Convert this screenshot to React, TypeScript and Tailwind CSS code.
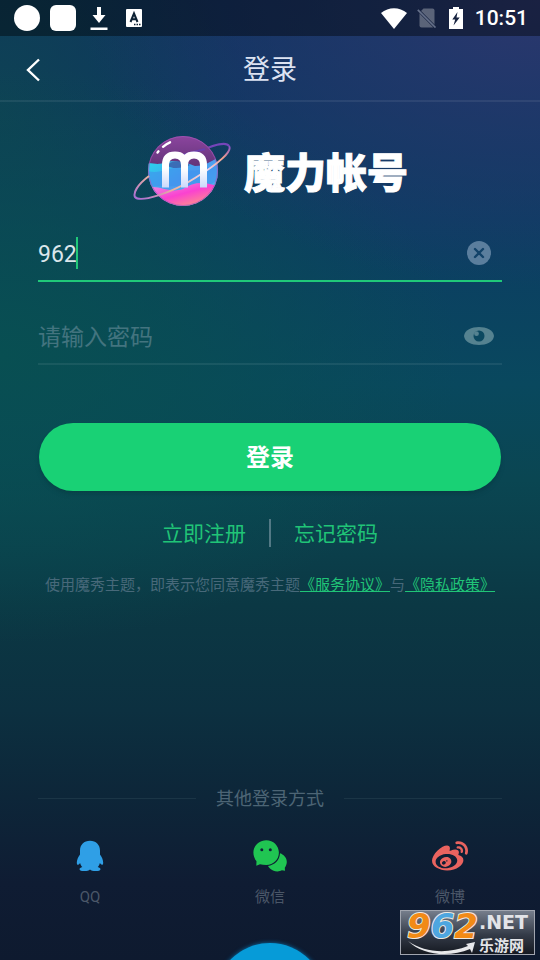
import { useState } from "react";
import type { ReactNode } from "react";
import { FaWeibo } from "react-icons/fa";

const PROVIDERS: { name: string; icon: ReactNode }[] = [
  { name: "QQ", icon: <QQIcon /> },
  { name: "微信", icon: <WeChatIcon /> },
  { name: "微博", icon: <FaWeibo className="h-9 w-9 text-[#e9635f]" /> },
];

function QQIcon() {
  return (
    <svg viewBox="0 0 36 36" className="h-9 w-9" fill="#2f9fe6">
      <path d="M18 1.800C12 1.800 8 6 8 11.500V15.500C6.100 18 4.800 21 4.800 23.700C4.800 25 5.300 26 6.200 25.700C7 25.500 7.600 24.800 8.100 24C8.600 25.800 9.200 27 10.300 28C8.500 28.500 7.500 29.300 7.500 30.200C7.500 31.500 9.500 32 12.300 32C15 32 17 31.400 18 30.400C19 31.400 21 32 23.700 32C26.500 32 28.500 31.500 28.500 30.200C28.500 29.300 27.500 28.500 25.700 28C26.800 27 27.400 25.800 27.900 24C28.400 24.800 29 25.500 29.800 25.700C30.700 26 31.200 25 31.200 23.700C31.200 21 29.900 18 28 15.500V11.500C28 6 24 1.800 18 1.800Z" />
    </svg>
  );
}

function WeChatIcon() {
  return (
    <svg viewBox="0 0 36 36" className="h-9 w-9">
      <path
        d="M28 14.300C32 15.700 34.800 19 34.800 23C34.800 25.300 33.900 27 32.800 28.700L33 31.800L29.800 31.300C27.700 32.700 24 32.800 21 31.500C18.600 30.500 17 28.800 16 27.100C22.500 26 27.600 21.500 28 14.300Z"
        fill="#20c552"
      />
      <path
        d="M14.200 1.200C21.300 1.200 26.900 6.700 26.900 13.600C26.900 20.600 21.500 26 14.300 26C12 26 9.800 25.800 8 25.300L4.300 26.700L4.500 22.300C2.600 20 1.400 17 1.400 13.600C1.400 6.700 7 1.200 14.200 1.200Z"
        fill="#20c552"
      />
      <circle cx="9.800" cy="10.700" r="1.500" fill="#0e2338" />
      <circle cx="18.300" cy="10.700" r="1.500" fill="#0e2338" />
    </svg>
  );
}

function StatusBar() {
  return (
    <div className="flex h-9 items-center justify-between bg-black/40 pr-3 pl-3.5 text-white">
      <div className="flex items-center">
        <span className="h-[26px] w-[26px] rounded-full bg-white" />
        <span className="ml-2.5 h-[26px] w-[26px] rounded-md bg-white" />
        <svg viewBox="0 0 18 24" className="ml-3.5 h-6 w-[18px]" fill="currentColor">
          <path d="M7 1H11V9H15.500L9 17L2.500 9H7Z" />
          <path d="M.500 21.500H17.500V24H.500Z" />
        </svg>
        <svg viewBox="0 0 16 18" className="ml-[18px] h-[18px] w-4">
          <rect width="16" height="18" rx="1" fill="#fff" />
          <path
            d="M4.500 13L8 4.500L11.500 13M5.800 10.300H10.200"
            fill="none"
            stroke="#0d2134"
            strokeWidth="2"
          />
          <path d="M8 15.500H9.500M10.500 15.500H12M13 15.500H14.500" stroke="#0d2134" strokeWidth="1.400" />
        </svg>
      </div>
      <div className="flex items-center">
        <svg viewBox="0 0 26 21" className="h-[21px] w-[26px]" fill="currentColor">
          <path d="M0 5C7.500-1.300 18.500-1.300 26 5L13 21Z" />
        </svg>
        <svg viewBox="0 0 20 20" className="ml-2.5 h-5 w-5">
          <path
            d="M6.500 .500H15.500Q17.500 .500 17.500 2.500V17.500Q17.500 19.500 15.500 19.500H4.500Q2.500 19.500 2.500 17.500V4.500Z"
            fill="#fff"
            opacity=".3"
          />
          <path d="M.800 1.800L18.500 19.500" stroke="#172340" strokeWidth="3" />
          <path d="M.800 1.800L18.500 19.500" stroke="#65708a" strokeWidth="1.700" />
        </svg>
        <svg viewBox="0 0 14 22" className="ml-3 h-[22px] w-3.5">
          <path d="M4 0H10V2H14V22H0V2H4Z" fill="#fff" />
          <path d="M8.500 5L3.300 12.500H6.200L4.500 18.500L10.700 10.500H7.500Z" fill="#172340" />
        </svg>
        <span className="ml-3 text-[21px] leading-6 font-medium">10:51</span>
      </div>
    </div>
  );
}

function PlanetLogo() {
  return (
    <svg viewBox="0 0 100 76" className="h-[76px] w-[100px]">
      <defs>
        <linearGradient id="sky" x1="0" y1="0" x2="0" y2="1">
          <stop offset="0" stopColor="#8d459f" />
          <stop offset=".45" stopColor="#613478" />
        </linearGradient>
        <linearGradient id="sea" x1="0" y1="0" x2="1" y2="1">
          <stop offset="0" stopColor="#23dceb" />
          <stop offset=".45" stopColor="#4b9cf0" />
          <stop offset="1" stopColor="#55c7ee" />
        </linearGradient>
        <linearGradient id="sand" x1="0" y1="0" x2=".8" y2="1">
          <stop offset="0" stopColor="#e99ae8" />
          <stop offset=".5" stopColor="#fa42d0" />
          <stop offset="1" stopColor="#ffa477" />
        </linearGradient>
        <linearGradient id="letter" x1="0" y1="0" x2="0" y2="1">
          <stop offset=".4" stopColor="#fff" />
          <stop offset="1" stopColor="#cbd8fb" />
        </linearGradient>
        <linearGradient id="ring" x1="0" y1="1" x2="1" y2="0">
          <stop offset="0" stopColor="#a66bd6" />
          <stop offset=".3" stopColor="#f0b39c" />
          <stop offset=".65" stopColor="#ecd6f5" />
          <stop offset=".85" stopColor="#f3a18b" />
          <stop offset="1" stopColor="#8750c9" />
        </linearGradient>
        <clipPath id="ball">
          <circle cx="51" cy="37" r="35" />
        </clipPath>
      </defs>
      <path d="M97 12C94 7 79 12 66 18" fill="none" stroke="#7545b9" strokeWidth="2" />
      <g clipPath="url(#ball)">
        <rect x="15" y="1" width="72" height="72" fill="url(#sky)" />
        <path d="M15 29C22 29 25 31 31 29C43 25 55 29 63 32C73 32 80 27 87 23V74H15Z" fill="url(#sea)" />
        <path d="M15 37C30 41 39 31 50 35C60 38 68 37 87 30V45C70 60 47 49 15 53Z" fill="#3f91ec" opacity=".6" />
        <path d="M34 31C41 25 52 27 58 31C52 34 40 36 34 31Z" fill="#3b4f9e" opacity=".7" />
        <path d="M15 54C27 50 36 60 51 55C62 47 75 48 87 53V74H15Z" fill="url(#sand)" />
        <path d="M44 24C53 19 66 17 73 15" fill="none" stroke="#6a3fae" strokeWidth="2" />
      </g>
      <circle cx="51" cy="37" r="34.500" fill="none" stroke="#a656b9" strokeWidth="1" opacity=".7" />
      <path
        d="M17 42C5 51 1 59 3 63C8 69 40 59 63 44C86 30 101 17 97 12"
        fill="none"
        stroke="url(#ring)"
        strokeWidth="2"
      />
      <path
        d="M33.500 53.500V31Q33.500 21 43 21Q52.500 21 52.500 31V53.500M52.500 31Q52.500 21 62 21Q71.500 21 71.500 31V53.500"
        fill="none"
        stroke="url(#letter)"
        strokeWidth="7"
      />
      <path
        d="M25.500 18.500L26.500 17.300M31 12.800Q34.500 9.800 38 8.300"
        fill="none"
        stroke="#fff"
        strokeWidth="2.400"
        strokeLinecap="round"
      />
    </svg>
  );
}

function SiteBadge() {
  return (
    <svg
      viewBox="0 0 135 45"
      className="absolute right-[5px] bottom-[5px] h-[45px] w-[135px] overflow-visible"
    >
      <defs>
        <linearGradient id="plate" x1="0" y1="0" x2="0" y2="1">
          <stop offset="0" stopColor="#777f8d" />
          <stop offset=".55" stopColor="#343b48" />
          <stop offset="1" stopColor="#141820" />
        </linearGradient>
      </defs>
      <rect x=".5" y=".5" width="134" height="44" fill="url(#plate)" stroke="#a1a5af" />
      <path d="M8 31C25 43 48 44 68 36L66 34L75 32L72 43L70 39C49 48 22 45 8 31Z" fill="#e7e8eb" />
      <text
        x="7"
        y="28"
        fill="#f28a16"
        stroke="#eee9e2"
        strokeWidth="2"
        paintOrder="stroke"
        fontFamily="DejaVu Sans, sans-serif"
        fontWeight="700"
        fontStyle="italic"
        fontSize="34"
      >
        9<tspan fill="#4ea6df">6</tspan>2
      </text>
      <text
        x="79"
        y="19"
        fill="#e3e4e8"
        fontFamily="DejaVu Sans, sans-serif"
        fontWeight="700"
        fontSize="19"
      >
        .NET
      </text>
      <text
        x="79"
        y="41"
        fill="#e3e4e8"
        fontFamily="Noto Sans CJK SC, sans-serif"
        fontWeight="700"
        fontSize="15"
      >
        乐游网
      </text>
    </svg>
  );
}

export default function App() {
  const [account, setAccount] = useState("962");
  const [password, setPassword] = useState("");
  const [showPassword, setShowPassword] = useState(false);

  return (
    <div className="relative flex min-h-screen flex-col overflow-hidden bg-[radial-gradient(ellipse_85%_30%_at_100%_0%,#2c376e_0%,#24386ccc_35%,#1d396b00_100%),radial-gradient(ellipse_85%_30%_at_0%_37%,#084f52_0%,#084e52b3_40%,#084e5200_100%),radial-gradient(ellipse_45%_35%_at_0%_12%,#0e4254_0%,#0d425400_100%),linear-gradient(180deg,#0f3260_0%,#0c3d63_23%,#09485e_40%,#0a4652_50%,#0b3f4b_57%,#0b3844_63%,#0c3040_74%,#0d2639_83%,#0f1c33_92%,#0e1a2f_100%)] font-['Roboto','Noto_Sans_CJK_SC',sans-serif]">
      <StatusBar />

      <header className="grid h-[66px] grid-cols-[66px_1fr_66px] items-center border-b-2 border-white/7">
        <button aria-label="返回" className="flex h-full items-center justify-center pt-1">
          <svg viewBox="0 0 14 24" className="h-6 w-3.5">
            <path d="M13 1.500L2 12L13 22.500" fill="none" stroke="#fff" strokeWidth="2.400" />
          </svg>
        </button>
        <h1 className="pt-1 text-center text-[27px] leading-8 text-[#dce3f2]">登录</h1>
      </header>

      <main className="flex flex-1 flex-col px-[38px]">
        <div className="mt-8 flex items-center justify-center gap-3">
          <PlanetLogo />
          <span className="pt-1 text-[41px] leading-[48px] font-black text-white [-webkit-text-stroke:1px_white]">
            魔力帐号
          </span>
        </div>

        <form onSubmit={(e) => e.preventDefault()}>
          <div className="mt-4 flex h-14 items-center border-b-2 border-[#20c879]">
            <label className="flex flex-1 items-center">
              <input
                type="text"
                aria-label="账号"
                value={account}
                onChange={(e) => setAccount(e.target.value)}
                className="field-sizing-content pt-1 text-[23px] leading-8 text-[#dbe6eb] caret-transparent outline-none"
              />
              <span className="-ml-px h-8 w-0.5 bg-[#20c879]" />
            </label>
            <button
              type="button"
              aria-label="清除"
              onClick={() => setAccount("")}
              className="flex w-[46px] justify-center"
            >
              <svg viewBox="0 0 24 24" className="h-6 w-6">
                <circle cx="12" cy="12" r="12" fill="#5b7e9d" />
                <path
                  d="M8 8L16 16M16 8L8 16"
                  stroke="#134369"
                  strokeWidth="2.400"
                  strokeLinecap="round"
                />
              </svg>
            </button>
          </div>

          <div className="mt-[27px] flex h-14 items-center border-b-2 border-white/7">
            <input
              type={showPassword ? "text" : "password"}
              aria-label="密码"
              placeholder="请输入密码"
              value={password}
              onChange={(e) => setPassword(e.target.value)}
              className="min-w-0 flex-1 pt-1 text-[23px] leading-8 text-[#dbe6eb] outline-none placeholder:text-[#43747f]"
            />
            <button
              type="button"
              aria-label="显示密码"
              onClick={() => setShowPassword(!showPassword)}
              className="flex w-[46px] justify-center"
            >
              <svg viewBox="0 0 30 18" className="h-[18px] w-[30px]">
                <path d="M0 9C1-3 29-3 30 9C29 21 1 21 0 9Z" fill="#558290" />
                <circle cx="15" cy="9" r="5.500" fill="#0b4860" />
                <circle cx="12.500" cy="6.700" r="2.400" fill="#558290" />
              </svg>
            </button>
          </div>

          <div className="mt-[58px] px-px">
            <button
              type="submit"
              className="h-[68px] w-full rounded-full bg-[#19d175] pt-0.5 text-2xl font-bold text-white shadow-md"
            >
              登录
            </button>
          </div>
        </form>

        <nav className="mt-[26px] flex items-center justify-center gap-[23px] text-[21px] leading-[30px] text-[#20c477]">
          <a href="#register" className="pt-0.5">立即注册</a>
          <span className="h-7 w-0.5 bg-[#527985]" />
          <a href="#forgot" className="pt-0.5">忘记密码</a>
        </nav>

        <p className="mt-6 text-center text-[15px] leading-6 text-[#48697a]">
          使用魔秀主题，即表示您同意魔秀主题
          <a href="#terms" className="text-[#20c477] underline">《服务协议》</a>
          与
          <a href="#privacy" className="text-[#20c477] underline">《隐私政策》</a>
        </p>
      </main>

      <footer className="pb-[51px]">
        <div className="flex items-center gap-5 px-[38px] text-lg leading-6 text-[#4d6575]">
          <span className="h-px flex-1 bg-[#1b3546]" />
          <span className="pt-0.5">其他登录方式</span>
          <span className="h-px flex-1 bg-[#1b3546]" />
        </div>
        <div className="mt-7 grid grid-cols-3">
          {PROVIDERS.map((p) => (
            <button key={p.name} className="flex flex-col items-center gap-2.5">
              {p.icon}
              <span className="text-[15px] leading-6 text-[#4b5768]">{p.name}</span>
            </button>
          ))}
        </div>
      </footer>

      <span className="absolute -bottom-[93px] left-1/2 h-[110px] w-[110px] -translate-x-1/2 rounded-full bg-[#069bd8] shadow-[0_0_4px_#0b6fa8]" />
      <SiteBadge />
    </div>
  );
}
